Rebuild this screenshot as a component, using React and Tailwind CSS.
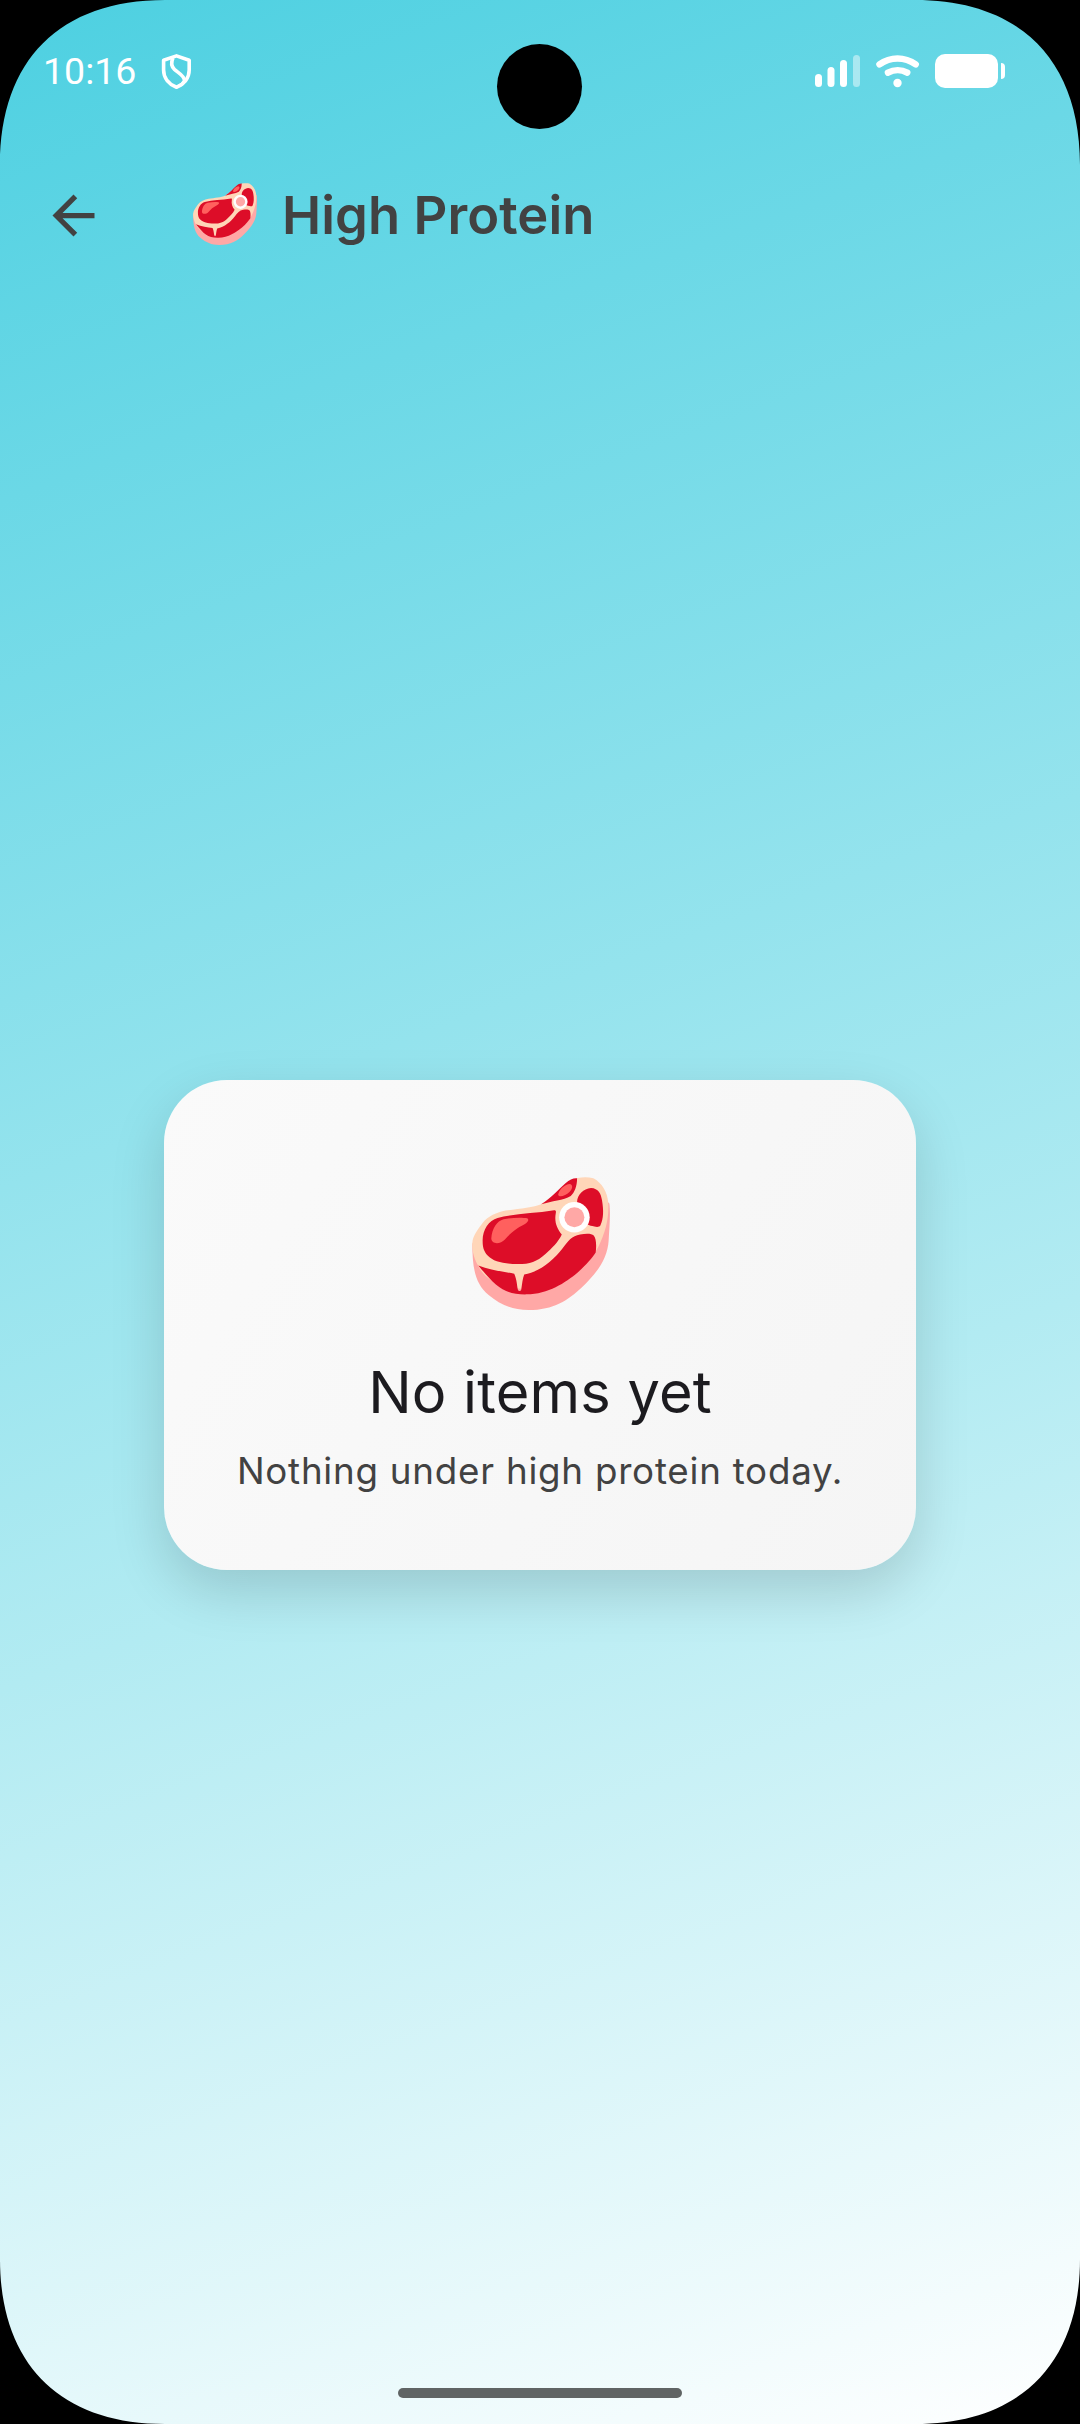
function Steak({ className }) {
  return (
    <svg className={className} viewBox="95 80 415 400" preserveAspectRatio="none" aria-hidden="true">
      <path fill="#ffa8a6" d="M96 280C96 350 103 400 145 435C178 463 215 480 265 480C340 480 385 450 425 412C470 370 503 325 506 270C508 235 512 190 508 160C490 130 300 200 96 280Z" />
      <path fill="#ffd6b8" d="M96 277C98 255 115 235 128 217C142 198 170 187 196 181C235 176 280 172 303 162L412 83C430 80 445 80 460 84C485 97 503 125 505 160C507 205 497 245 475 290C440 360 380 400 300 415C220 425 135 400 114 347C102 328 94 300 96 277Z" />
      <path fill="#dd0d28" d="M114 346C150 361 190 364 222 371C230 390 230 405 233 419C235 424 241 424 243 419C246 400 247 385 252 373C300 365 340 330 367 295C385 272 395 257 420 253C440 249 455 250 461 256C468 265 470 282 467 307C455 325 440 343 413 367C375 398 325 432 259 433C190 434 165 408 114 346Z" />
      <path fill="#dd0d28" d="M127 273C126 240 145 210 172 203C220 190 280 190 342 180C348 180 348 184 347 188C342 215 350 235 365 253C355 275 335 295 315 312C290 334 270 342 232 342C190 341 160 335 142 316C130 303 127 290 127 273Z" />
      <path fill="#dd0d28" d="M303 162C335 142 355 117 377 98C388 88 400 83 411 84C411 108 403 128 392 137C370 150 335 152 303 162Z" />
      <path fill="#dd0d28" d="M411 155C412 132 430 116 453 113C475 114 483 130 486 150C491 180 491 205 481 226C478 231 470 231 463 229C455 227 448 226 441 222Z" />
      <path fill="#ff605e" d="M153 265C155 235 170 212 190 207C215 202 245 201 261 204C268 209 263 216 253 222C225 236 210 250 194 268C180 283 154 283 153 265Z" />
      <path fill="#ff605e" d="M354 134C356 120 370 104 388 101C400 102 398 116 388 125C377 135 359 143 354 134Z" />
      <circle cx="403" cy="201" r="46" fill="#fff" />
      <circle cx="403" cy="201" r="30" fill="#ffa8a6" />
    </svg>
  );
}

function Corner({ className }) {
  return (
    <svg className={className} viewBox="0 0 165 165" width="165" height="165" aria-hidden="true">
      <path d="M0 0H165C60 0 0 60 0 165Z" fill="#000" />
    </svg>
  );
}

function StatusBar() {
  return (
    <header className="flex h-[142px] shrink-0 items-start justify-between pl-[43px] pr-[75px] pt-[54px] text-white">
      <div className="flex items-start">
        <span className="-mt-[5px] w-[118px] whitespace-nowrap font-[Roboto,sans-serif] text-[37.500px] leading-[44px]">10:16</span>
        <svg className="-ml-[1px] h-[35px] w-[32px]" viewBox="0 0 32 35" fill="none" stroke="currentColor" strokeWidth="3.600" strokeLinejoin="round" aria-hidden="true">
          <path d="M16.500 1.900L29.200 6.200V16C29.200 24.500 23.500 30.500 16.500 33.200C9.300 30.500 3.600 24.500 3.600 16V6.200Z" />
          <path d="M13 4C10.800 8.500 11.500 12.500 14.500 15.500C18 19 24.500 21 24.500 27C23.500 29 21 31 19 32" />
        </svg>
      </div>
      <div className="flex items-start">
        <svg className="h-[34px] w-[46px]" viewBox="0 0 46 34" fill="currentColor" aria-hidden="true">
          <rect x="0" y="20" width="7" height="13" rx="3.500" />
          <rect x="12.500" y="13" width="7" height="20" rx="3.500" />
          <rect x="25" y="6" width="7" height="27" rx="3.500" />
          <rect x="38" y="1" width="7" height="32" rx="3.500" opacity=".45" />
        </svg>
        <svg className="ml-[15px] h-[34px] w-[44px]" viewBox="0 0 44 34" fill="none" stroke="currentColor" strokeWidth="6.500" strokeLinecap="round" aria-hidden="true">
          <path d="M3.500 10.300C14.500 2.400 28.500 2.400 39.700 10.300" />
          <path d="M12 18.700C18 15.500 25.500 15.500 31.200 18.700" />
          <circle cx="21.500" cy="29" r="4.200" fill="currentColor" stroke="none" />
        </svg>
        <span className="ml-[15px] h-[34px] w-[63px] rounded-[10px] bg-white" />
        <span className="ml-[3px] mt-[9px] h-4 w-1 rounded-r-[4px] bg-white" />
      </div>
    </header>
  );
}

export default function App() {
  return (
    <div className="relative flex h-[2424px] w-[1080px] flex-col overflow-hidden bg-[linear-gradient(160deg,#4dd0e1_0%,#b2ebf2_60%,#ffffff_100%)] font-[Inter,sans-serif]">
      <StatusBar />
      <div className="flex h-[147px] shrink-0 items-center pl-[42px]">
        <svg className="h-[63px] w-[63px] text-[#424242]" viewBox="0 0 24 24" fill="currentColor" role="img" aria-label="Back">
          <path d="M20 11H7.830l5.590-5.590L12 4l-8 8 8 8 1.410-1.410L7.830 13H20v-2z" />
        </svg>
        <Steak className="mb-[3px] ml-[88px] h-[62px] w-[64px]" />
        <h1 className="mb-[2px] ml-[25px] whitespace-nowrap text-[52.500px] font-semibold leading-[64px] tracking-[0.080px] text-[#424242]">High Protein</h1>
      </div>
      <main className="flex flex-1 flex-col items-center pt-[791px]">
        <section className="flex h-[490px] w-[752px] flex-col items-center rounded-[63px] bg-[linear-gradient(123deg,#fafafa,#f5f5f5)] pt-[97px] shadow-[0_21px_54px_rgba(0,0,0,0.15)]">
          <Steak className="ml-[1px] h-[133px] w-[138px]" />
          <h2 className="mt-[45px] whitespace-nowrap text-[57.750px] leading-[74px] tracking-[0.170px] text-[#1c1b1f]">No items yet</h2>
          <p className="mt-[16px] whitespace-nowrap text-[36.750px] leading-[52px] tracking-[0.750px] text-[#424242]">Nothing under high protein today.</p>
        </section>
      </main>
      <div className="mb-[26px] h-[10px] w-[284px] shrink-0 self-center rounded-full bg-[#606464]" />
      <div className="absolute left-[497px] top-[44px] h-[85px] w-[85px] rounded-full bg-black" />
      <Corner className="absolute left-0 top-0" />
      <Corner className="absolute right-0 top-0 rotate-90" />
      <Corner className="absolute bottom-0 right-0 rotate-180" />
      <Corner className="absolute bottom-0 left-0 -rotate-90" />
    </div>
  );
}
